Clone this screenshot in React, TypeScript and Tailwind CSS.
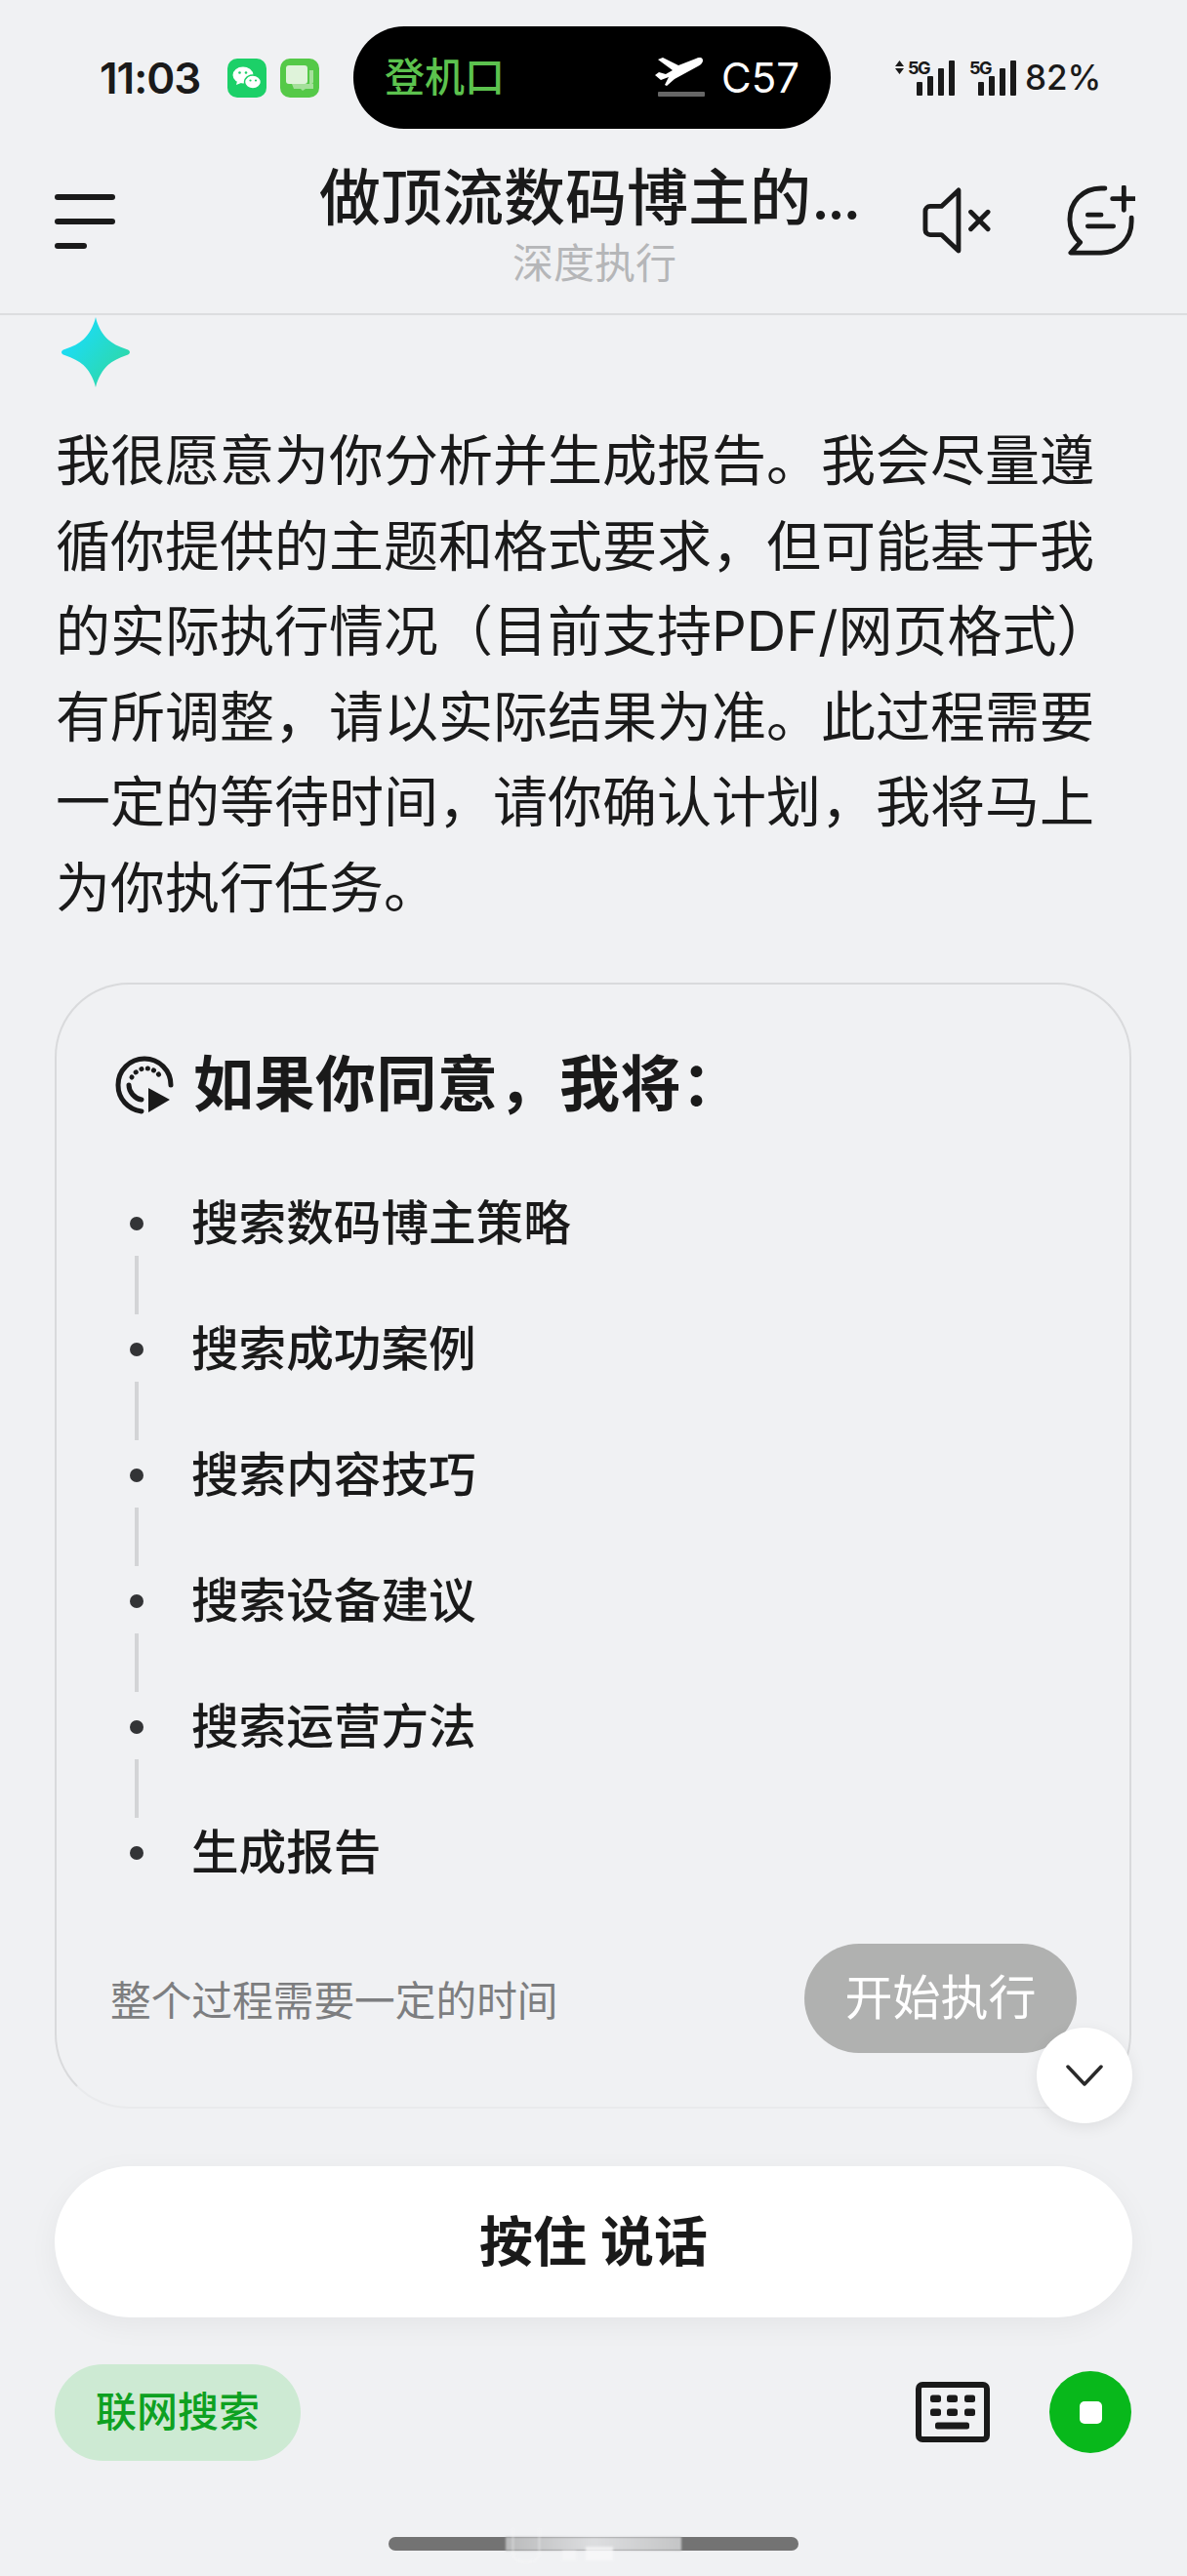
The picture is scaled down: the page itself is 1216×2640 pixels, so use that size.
const CJK = "font-['Inter','Noto_Sans_CJK_SC',sans-serif]";

function StatusBar() {
  return (
    <div className="flex h-[132px] items-end">
      <div className="flex h-[105px] w-full items-center pl-[102px]">
        <span className="w-[131px] font-['Inter'] text-[44px] leading-none font-semibold tracking-[-1px] text-[#1a1a1a]">11:03</span>
        <svg width="40" height="40" viewBox="0 0 40 40" className="mr-[14px]">
          <rect width="40" height="40" rx="10" fill="#1cd068" />
          <ellipse cx="16" cy="17" rx="10.5" ry="8.5" fill="#fff" />
          <path d="M10 23l-1 4 5-2z" fill="#fff" />
          <ellipse cx="26" cy="24" rx="8.5" ry="7" fill="#fff" stroke="#1cd068" strokeWidth="1.5" />
          <circle cx="12.5" cy="14.5" r="1.3" fill="#1cd068" />
          <circle cx="19" cy="14.5" r="1.3" fill="#1cd068" />
          <circle cx="23.5" cy="22.5" r="1.1" fill="#1cd068" />
          <circle cx="29" cy="22.5" r="1.1" fill="#1cd068" />
        </svg>
        <svg width="40" height="40" viewBox="0 0 40 40">
          <rect width="40" height="40" rx="10" fill="#55c948" />
          <rect x="6" y="7" width="22" height="19" rx="3" fill="#dff3da" />
          <path d="M14 26h18a2 2 0 0 0 2-2V12h-4v14z" fill="#a5e09b" />
          <path d="M12 26h22v5H26l-3 2-2-2h-7z" fill="#a5e09b" />
        </svg>
        <div className="ml-[35px] flex h-[105px] w-[489px] items-center rounded-[52px] bg-black pl-[32px]">
          <span className={`${CJK} w-[277px] text-[41px] leading-none font-medium text-[#5cc24e]`}>登机口</span>
          <svg width="52" height="42" viewBox="0 0 52 42" className="mr-[16px]">
            <path d="M3 2L8 0l16 8 18-7c4-2 7-1 7 2s-3 5-7 7L20 22l-8 7-2-1 4-8-8 3-6-5 4-3 7 2 7-4z" fill="#fff" />
            <rect x="3" y="35" width="48" height="5" rx="1" fill="#666" />
          </svg>
          <span className="font-['Inter'] text-[42px] leading-none text-white">C57</span>
        </div>
        <svg width="130" height="40" viewBox="0 0 130 40" className="ml-[66px]">
          <path d="M4.500 2l4.500 6H0zM4.500 16L0 10h9z" fill="#1a1a1a" />
          <text x="13" y="16" fontFamily="Inter" fontWeight="700" fontSize="18" letterSpacing="-1.5" fill="#1a1a1a">5G</text>
          <rect x="22" y="24" width="6" height="14" rx="1" fill="#1a1a1a" />
          <rect x="33" y="18" width="6" height="20" rx="1" fill="#1a1a1a" />
          <rect x="44" y="10" width="6" height="28" rx="1" fill="#1a1a1a" />
          <rect x="55" y="2" width="6" height="36" rx="1" fill="#1a1a1a" />
          <text x="76" y="16" fontFamily="Inter" fontWeight="700" fontSize="18" letterSpacing="-1.5" fill="#1a1a1a">5G</text>
          <rect x="85" y="24" width="6" height="14" rx="1" fill="#1a1a1a" />
          <rect x="96" y="18" width="6" height="20" rx="1" fill="#1a1a1a" />
          <rect x="107" y="10" width="6" height="28" rx="1" fill="#1a1a1a" />
          <rect x="118" y="2" width="6" height="36" rx="1" fill="#1a1a1a" />
        </svg>
        <span className="ml-[3px] font-['Inter'] text-[35px] leading-none font-medium text-[#1a1a1a]">82%</span>
      </div>
    </div>
  );
}

function Header() {
  return (
    <div className="flex h-[191px] items-start border-b-2 border-[#dcdddf] pl-[56px]">
      <div className="mt-[67px] flex w-[62px] flex-col gap-[19px]">
        <div className="h-[6px] w-[62px] rounded-full bg-[#1a1a1a]" />
        <div className="h-[6px] w-[62px] rounded-full bg-[#1a1a1a]" />
        <div className="h-[6px] w-[33px] rounded-full bg-[#1a1a1a]" />
      </div>
      <div className="flex w-[829px] shrink-0 flex-col pt-[32px] whitespace-nowrap">
        <div className={`${CJK} ml-[209px] flex items-baseline text-[63px] leading-[76px] font-medium text-[#1a1a1a]`}>
          <span>做顶流数码博主的</span>
          <span className="tracking-[-3px]">...</span>
        </div>
        <div className={`${CJK} mt-[6px] ml-[407px] text-[42px] leading-[48px] text-[#b5b6b8]`}>深度执行</div>
      </div>
      <svg width="70" height="68" viewBox="0 0 72 70" className="mt-[60px] -ml-[2px]" fill="none" stroke="#1a1a1a" strokeWidth="5" strokeLinecap="round" strokeLinejoin="round">
        <path d="M38 3v64L20 50H8a5 5 0 0 1-5-5V25a5 5 0 0 1 5-5h12z" />
        <path d="M51 26l18 18M69 26L51 44" />
      </svg>
      <svg width="70" height="72" viewBox="0 0 72 74" className="mt-[58px] ml-[78px]" fill="none" stroke="#1a1a1a" strokeWidth="5" strokeLinecap="round" strokeLinejoin="round">
        <path d="M40 3H36C16 3 3 18 3 36c0 10 4 18 11 24l-10 11h32c18 0 32-14 32-33v-4" />
        <path d="M48 14h24M60 2v24M22 31h14M22 43h27" />
      </svg>
    </div>
  );
}

function Star() {
  return (
    <svg width="72" height="72" viewBox="2 0 68 72" preserveAspectRatio="none" className="mt-[2px] ml-[62px]">
      <defs>
        <linearGradient id="star" x1="0" y1="0.2" x2="1" y2="1">
          <stop offset="0.15" stopColor="#1cdcf2" />
          <stop offset="0.9" stopColor="#30d8a0" />
        </linearGradient>
      </defs>
      <path d="M36 0C38 10 43 18 48 23 52 27 58 30 66 33 70 34 70 38 66 39 58 42 52 45 48 49 43 54 38 62 36 72 34 62 29 54 24 49 20 45 14 42 6 39 2 38 2 34 6 33 14 30 20 27 24 23 29 18 34 10 36 0Z" fill="url(#star)" />
    </svg>
  );
}

const paragraph = [
  "我很愿意为你分析并生成报告。我会尽量遵",
  "循你提供的主题和格式要求，但可能基于我",
  "的实际执行情况（目前支持PDF/网页格式）",
  "有所调整，请以实际结果为准。此过程需要",
  "一定的等待时间，请你确认计划，我将马上",
  "为你执行任务。",
];

const steps = ["搜索数码博主策略", "搜索成功案例", "搜索内容技巧", "搜索设备建议", "搜索运营方法", "生成报告"];

function Card() {
  return (
    <div className="relative mt-[52px] mr-[57px] ml-[56px] h-[1154px] rounded-[76px] border-2 border-[#d9dadc] border-b-[#e9eaec] pt-[68px] pl-[60px]">
      <div className="flex items-center">
        <svg width="60" height="60" viewBox="0 0 60 60" fill="none" stroke="#1a1a1a" strokeLinecap="round">
          <path d="M27 57C13 55 3 44 3 30 3 15 15 3 30 3s27 12 27 27" strokeWidth="5" />
          <path d="M27 45c-7-1-13-8-13-15" strokeWidth="5" />
          <path d="M17 22l4-5 7-4 8 0 7 4 5 7" strokeWidth="5" strokeDasharray="0.1 6.500" />
          <path d="M34 33l22 12-22 13z" fill="#1a1a1a" stroke="none" />
        </svg>
        <span className={`${CJK} ml-[20px] text-[62px] leading-[70px] font-bold tracking-[0.5px] text-[#1a1a1a]`}>如果你同意，我将：</span>
      </div>
      <div className="mt-[75px] flex flex-col">
        {steps.map((s, i) => (
          <div key={s} className="relative flex h-[129px] items-start">
            <div className="mt-[25px] ml-[15px] h-[14px] w-[14px] rounded-full bg-[#333436]" />
            <span className={`${CJK} ml-[49px] text-[48.600px] leading-[64px] font-medium text-[#1a1a1a]`}>{s}</span>
            {i < steps.length - 1 && <div className="absolute top-[65px] left-[20px] h-[60px] w-[4px] bg-[#d3d4d6]" />}
          </div>
        ))}
      </div>
      <div className="-mt-[4px] -ml-[5px] flex items-start pr-[54px]">
        <span className={`${CJK} mt-[32px] flex-1 text-[41.700px] leading-[54px] text-[#7d7e80]`}>整个过程需要一定的时间</span>
        <div className={`${CJK} flex h-[112px] w-[279px] items-center justify-center rounded-[56px] bg-[#b0b1b0] text-[49px] leading-none text-white`}>开始执行</div>
      </div>
      <div className="absolute top-[1069px] left-[1004px] flex h-[98px] w-[98px] items-center justify-center rounded-full bg-white shadow-[0_4px_16px_rgba(0,0,0,0.08)]">
        <svg width="38" height="24" viewBox="0 0 38 24" fill="none" stroke="#2a2a2a" strokeWidth="3.500" strokeLinecap="round" strokeLinejoin="round">
          <path d="M2 3l17 18L36 3" />
        </svg>
      </div>
    </div>
  );
}

function Bottom() {
  return (
    <>
      <div className={`${CJK} mx-[56px] mt-[59px] flex h-[155px] items-center justify-center gap-[14px] rounded-[78px] bg-white text-[55px] leading-none font-bold text-[#1a1a1a] shadow-[0_8px_30px_rgba(0,0,0,0.05)]`}>
        <span>按住</span>
        <span>说话</span>
      </div>
      <div className="mt-[48px] flex h-[99px] items-center pr-[57px] pl-[56px]">
        <div className={`${CJK} flex h-[99px] w-[252px] items-center justify-center rounded-[50px] bg-[#cdead3] text-[42px] leading-none font-medium text-[#0ea121]`}>联网搜索</div>
        <svg width="76" height="62" viewBox="0 0 76 62" className="mt-[-1px] ml-auto" fill="none">
          <rect x="3" y="3" width="70" height="56" rx="4" stroke="#1a1a1a" strokeWidth="6" />
          <g fill="#1a1a1a">
            <rect x="15" y="13.500" width="11" height="7.500" rx="2.500" />
            <rect x="32" y="13.500" width="11" height="7.500" rx="2.500" />
            <rect x="50" y="13.500" width="11" height="7.500" rx="2.500" />
            <rect x="15" y="27.500" width="11" height="7.500" rx="2.500" />
            <rect x="32" y="27.500" width="11" height="7.500" rx="2.500" />
            <rect x="50" y="27.500" width="11" height="7.500" rx="2.500" />
            <rect x="20" y="41.500" width="35" height="7" rx="2.500" />
          </g>
        </svg>
        <div className="ml-[61px] flex h-[84px] w-[84px] items-center justify-center rounded-full bg-[#08b81b]">
          <div className="h-[23px] w-[23px] rounded-[5px] bg-white" />
        </div>
      </div>
      <div className="relative mx-auto mt-[78px] h-[14px] w-[420px] rounded-full bg-[#737373]">
        <div className="absolute top-0 left-[120px] h-[14px] w-[180px] bg-linear-to-r from-[#b9babb] via-[#dddee0] to-[#c4c5c6] blur-[1px]" />
        <div className="absolute top-[-8px] left-[127px] h-[34px] w-[28px] rounded-b-[10px] border-x border-b border-[#fafafa] opacity-70 blur-[1px]" />
        <div className="absolute top-[14px] left-[178px] h-[10px] w-[14px] bg-[#f8f8f9] opacity-70 blur-[1px]" />
        <div className="absolute top-[10px] left-[202px] h-[14px] w-[28px] bg-[#fafafb] opacity-70 blur-[1px]" />
      </div>
    </>
  );
}

export default function App() {
  return (
    <div className="h-[2640px] w-[1216px] overflow-hidden bg-[#f0f1f3]">
      <StatusBar />
      <Header />
      <Star />
      <div className={`${CJK} mt-[32px] px-[57px] text-[56px] leading-[87.600px] whitespace-nowrap text-[#1a1a1a]`}>
        {paragraph.map((l) => (
          <div key={l}>{l}</div>
        ))}
      </div>
      <Card />
      <Bottom />
    </div>
  );
}
